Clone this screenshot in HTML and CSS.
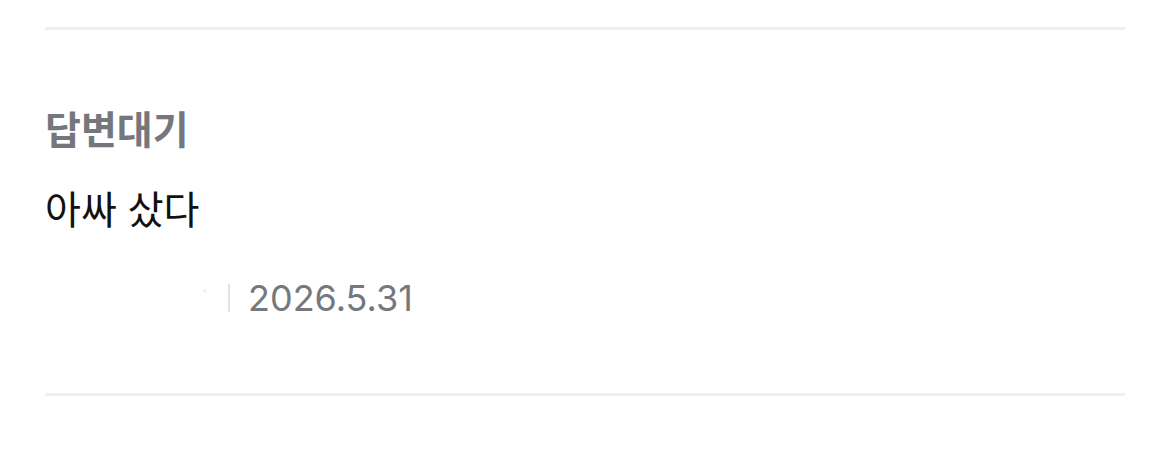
FILE: index.html
```html
<!DOCTYPE html>
<html lang="ko">
	<head>
		<meta charset="utf-8">
		<title>문의 내역</title>
		<link rel="stylesheet" href="styles.css">
	</head>
	<body>
	<div class="list">
		<div class="item">
			<p class="status">답변대기</p>
			<p class="content">아싸 샀다</p>
			<div class="meta">
				<span class="writer"><i class="dot"></i></span>
				<span class="bar"></span>
				<span class="date">2026.5.31</span>
			</div>
		</div>
	</div>
	</body>
</html>
```

FILE: styles.css
```css
* {margin: 0;padding: 0;}
body {
	background: #fff;
	font-family: "Noto Sans CJK KR", "Noto Sans", sans-serif;
}
.list {
	padding: 27px 45px 0;
}
.item {
	border-top: 3px solid #efefef;
	border-bottom: 3px solid #efefef;
	padding: 72px 0 70px;
}
.status {
	font-size: 39px;
	font-weight: 700;
	line-height: 50px;
	color: #74777c;
}
.content {
	margin-top: 30px;
	font-size: 39px;
	line-height: 50px;
	color: #111;
}
.meta {
	margin-top: 41px;
	display: flex;
	align-items: center;
	height: 50px;
}
.writer {
	width: 160px;
	height: 30px;
	position: relative;
}
.dot {
	position: absolute;
	left: 158px;
	top: 6px;
	width: 4px;
	height: 4px;
	border-radius: 50%;
	background: #f0f0f0;
}
.bar {
	width: 2px;
	height: 28px;
	background: #e2e2e2;
	margin: 0 18px 0 23px;
}
.date {
	font-family: "Inter", "Noto Sans", sans-serif;
	font-size: 36px;
	color: #75797e;
}
```
